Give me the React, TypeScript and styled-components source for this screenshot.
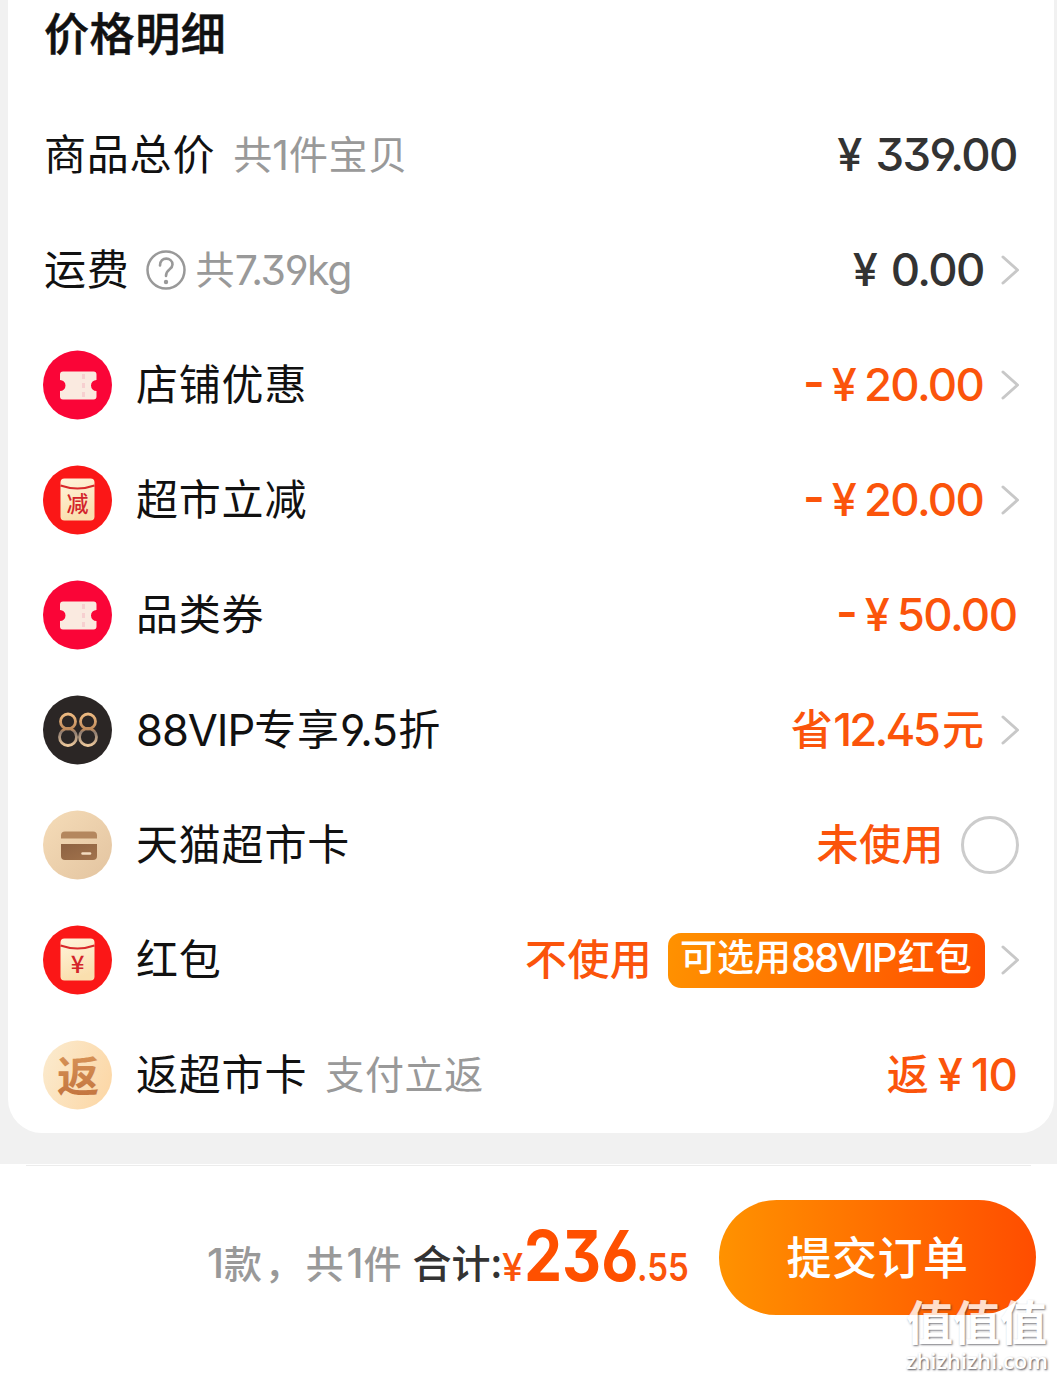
import React from 'react';
import styled, { createGlobalStyle } from 'styled-components';

const GlobalStyle = createGlobalStyle`
  * { box-sizing: border-box; }
  body {
    margin: 0;
    background: #f1f1f1;
    font-family: Inter, "Noto Sans CJK SC", sans-serif;
    font-feature-settings: "cv09" 1, "ss01" 1;
    color: #111;
  }
`;

const Page = styled.div`
  width: 1057px;
  height: 1379px;
  overflow: hidden;
  display: flex;
  flex-direction: column;
  position: relative;
`;

const Card = styled.section`
  margin: 0 3px 0 8px;
  height: 1133px;
  background: #fff;
  border-radius: 0 0 34px 34px;
  padding: 0 36px;
`;

const Title = styled.h1`
  margin: 0;
  height: 97.5px;
  font-size: 45px;
  line-height: 64px;
  font-weight: 500;
  -webkit-text-stroke: 0.5px #111;
  font-family: "Noto Sans CJK SC", sans-serif;
  letter-spacing: 0.6px;
`;

const Row = styled.div`
  height: 115px;
  display: flex;
  align-items: center;
  justify-content: space-between;
`;

const Side = styled.div`
  display: flex;
  align-items: center;
`;

type TextProps = {
  $size?: number;
  $weight?: number;
  $color?: string;
  $track?: number;
  $before?: number;
  $after?: number;
};

const Text = styled.span<TextProps>`
  display: block;
  white-space: pre;
  line-height: 60px;
  font-size: ${(p) => p.$size ?? 42}px;
  font-weight: ${(p) => p.$weight ?? 400};
  color: ${(p) => p.$color ?? '#111'};
  letter-spacing: ${(p) => p.$track ?? 0}px;
  margin: 0 ${(p) => p.$after ?? 0}px 0 ${(p) => p.$before ?? 0}px;
`;

const Han = styled(Text)`
  font-family: "Noto Sans CJK SC", sans-serif;
  padding-bottom: 6px;
`;

const Minus = styled(Text)`
  padding-bottom: 7px;
  font-weight: 600;
`;

const Icon = styled.svg`
  display: block;
  width: 70px;
  height: 70px;
  margin: 0 23px 0 -1px;
  font-family: "Noto Sans CJK SC", sans-serif;
`;

const Help = styled.svg`
  display: block;
  width: 40px;
  height: 40px;
  margin: 0 10px 0 16px;
`;

const Chevron = styled.svg`
  display: block;
  width: 20px;
  height: 32px;
  margin: 0 -2px 0 15px;
`;

const Radio = styled.span`
  width: 58px;
  height: 58px;
  border: 3px solid #ccc;
  border-radius: 50%;
  margin: 0 -1px 0 17px;
`;

const Badge = styled.span`
  display: flex;
  width: 317px;
  height: 55px;
  margin-left: 16px;
  padding: 0 0 5px 12px;
  align-items: center;
  border-radius: 13px;
  background: linear-gradient(100deg, #ff9200, #ff4d00);
`;

const Footer = styled.footer`
  margin-top: 31px;
  height: 215px;
  background: linear-gradient(#ececec, #ececec) 26px 1px / 1005px 1px no-repeat #fff;
  display: flex;
  align-items: flex-start;
  justify-content: space-between;
  padding: 36px 21px 0 207px;
`;

const Summary = styled.div`
  display: flex;
  align-items: flex-start;
`;

const Count = styled.div`
  display: flex;
  align-items: baseline;
  padding-top: 31px;
`;

const Total = styled.div`
  display: flex;
  align-items: baseline;
  padding-top: 26px;
`;

const Figure = styled.span<{ $size: number; $weight: number; $width: number; $before: number; $color: string }>`
  display: block;
  width: ${(p) => p.$width}px;
  margin-left: ${(p) => p.$before}px;
  font-size: ${(p) => p.$size}px;
  font-weight: ${(p) => p.$weight};
  line-height: 60px;
  color: ${(p) => p.$color};
  transform: scaleX(0.87);
  transform-origin: left;
`;

const Submit = styled.button`
  width: 317px;
  height: 115px;
  border: 0;
  border-radius: 58px;
  background: linear-gradient(90deg, #ff9200, #ff4d00);
  color: #fff;
  font: 500 45px/60px "Noto Sans CJK SC", sans-serif;
  letter-spacing: 0.5px;
  padding: 0 0 3px;
`;

const Watermark = styled.div`
  position: absolute;
  left: 906px;
  top: 1295px;
  width: 145px;
  color: #fff;
  opacity: 0.8;
  font-family: "Noto Sans CJK SC", sans-serif;
`;

const MarkName = styled.div`
  font-size: 47px;
  line-height: 50px;
  font-weight: 700;
  text-shadow: 1px 1px 2px rgba(50, 50, 60, 0.8);
`;

const MarkSite = styled.div`
  font: 600 22px/22px "Open Sans", sans-serif;
  letter-spacing: -0.1px;
  margin-top: 4px;
  text-shadow: 1px 1px 2px rgba(40, 40, 50, 1);
`;

const ORANGE = '#fb540b';
const GREY = '#999';
const DARK = '#333';

const Arrow = () => (
  <Chevron viewBox="0 0 20 32" fill="none" stroke="#c8c8c8" strokeWidth="3" strokeLinecap="round" strokeLinejoin="round">
    <path d="M3 3 17.5 16 3 29" />
  </Chevron>
);

const Coupon = () => (
  <Icon viewBox="0 0 70 70">
    <circle cx="34.500" cy="35" r="34.500" fill="#fa0537" />
    <path d="M20 21.500H50.500Q53.500 21.500 53.500 24.500V30A5.500 5.500 0 0 0 53.500 41V46.500Q53.500 49.500 50.500 49.500H20Q17 49.500 17 46.500V41A5.500 5.500 0 0 0 17 30V24.500Q17 21.500 20 21.500Z" fill="#faeae0" />
    <path d="M40.500 24V47" stroke="#f7d0d0" strokeWidth="3" strokeDasharray="5 4" />
  </Icon>
);

const Packet = ({ label, size }: { label: string; size: number }) => (
  <Icon viewBox="0 0 70 70">
    <defs>
      <linearGradient id="packet" x1="0" y1="0" x2="0.3" y2="1">
        <stop offset="0" stopColor="#fff4dc" />
        <stop offset="1" stopColor="#fadfae" />
      </linearGradient>
    </defs>
    <circle cx="34.500" cy="35" r="34.500" fill="#fb1717" />
    <rect x="17.500" y="13.500" width="34" height="42" rx="4" fill="url(#packet)" />
    <path d="M17.500 20.500Q34.500 26.500 51.500 20.500" fill="none" stroke="#d8292b" strokeWidth="2" />
    <text x="34.500" y={size > 22 ? 47.5 : 46.5} textAnchor="middle" fontSize={size} fontWeight="500" fill="#d3242b">{label}</text>
  </Icon>
);

const Vip = () => (
  <Icon viewBox="0 0 70 70">
    <defs>
      <linearGradient id="gold" gradientUnits="userSpaceOnUse" x1="0" y1="18" x2="0" y2="52">
        <stop offset="0" stopColor="#f0bc83" />
        <stop offset="0.48" stopColor="#c08a5a" />
        <stop offset="0.56" stopColor="#8d7b70" />
        <stop offset="1" stopColor="#f5cfa0" />
      </linearGradient>
    </defs>
    <circle cx="34.500" cy="35" r="34.500" fill="#2b2625" />
    <g fill="none" stroke="url(#gold)" strokeWidth="2.800">
      <circle cx="25" cy="26.500" r="7.500" />
      <circle cx="25" cy="42" r="8.500" />
      <circle cx="45" cy="26.500" r="7.500" />
      <circle cx="45" cy="42" r="8.500" />
    </g>
  </Icon>
);

const CardIcon = () => (
  <Icon viewBox="0 0 70 70">
    <defs>
      <linearGradient id="sand" x1="0" y1="0" x2="1" y2="1">
        <stop offset="0" stopColor="#f5dcb8" />
        <stop offset="1" stopColor="#e3c4a0" />
      </linearGradient>
      <linearGradient id="brown" x1="0" y1="0" x2="1" y2="1">
        <stop offset="0" stopColor="#8d6242" />
        <stop offset="1" stopColor="#a2734c" />
      </linearGradient>
    </defs>
    <circle cx="34.500" cy="35" r="34.500" fill="url(#sand)" />
    <path d="M18 28.500V25.500Q18 21.500 22 21.500H50Q54 21.500 54 25.500V28.500Z" fill="#b4875e" />
    <path d="M18 34H54V46Q54 50 50 50H22Q18 50 18 46Z" fill="url(#brown)" />
    <path d="M39.500 43.500H47" stroke="#f3dcc0" strokeWidth="2.500" strokeLinecap="round" />
  </Icon>
);

const Rebate = () => (
  <Icon viewBox="0 0 70 70">
    <defs>
      <linearGradient id="cream" x1="0" y1="0.200" x2="1" y2="0.600">
        <stop offset="0" stopColor="#fbeacd" />
        <stop offset="1" stopColor="#fcd8a8" />
      </linearGradient>
      <linearGradient id="copper" x1="0" y1="0" x2="0" y2="1">
        <stop offset="0" stopColor="#dc9a5c" />
        <stop offset="1" stopColor="#c0703c" />
      </linearGradient>
    </defs>
    <circle cx="34.500" cy="35" r="34.500" fill="url(#cream)" />
    <text x="35" y="51.500" textAnchor="middle" fontSize="42" fontWeight="700" fill="url(#copper)">返</text>
  </Icon>
);

const Discount = ({ value }: { value: string }) => (
  <>
    <Minus $size={47} $color={ORANGE}>-</Minus>
    <Text $size={45} $weight={500} $color={ORANGE} $before={7}>¥</Text>
    <Text $size={45.5} $weight={500} $color={ORANGE} $track={-1.6} $before={7} $after={1.6}>{value}</Text>
  </>
);

const Price = ({ value }: { value: string }) => (
  <>
    <Text $size={45} $weight={500} $color={DARK}>¥</Text>
    <Text $size={45.5} $weight={500} $color={DARK} $track={-1.6} $before={13} $after={1.2}>{value}</Text>
  </>
);

export default function App() {
  return (
    <>
      <GlobalStyle />
      <Page>
        <Card>
          <Title>价格明细</Title>
          <Row>
            <Side>
              <Han $track={0.8}>商品总价</Han>
              <Han $size={39} $color={GREY} $before={18}>共</Han>
              <Text $size={41} $color={GREY}>1</Text>
              <Han $size={39} $color={GREY} $track={0.7}>件宝贝</Han>
            </Side>
            <Side><Price value="339.00" /></Side>
          </Row>
          <Row>
            <Side>
              <Han $track={0.8}>运费</Han>
              <Help viewBox="0 0 40 40" fill="none" stroke="#999" strokeWidth="2.5">
                <circle cx="20" cy="20" r="18.500" />
                <path d="M14 15.500C14 6 26.500 7 26.500 14.500C26.500 20 20 18.500 20 26" strokeWidth="2.600" strokeLinecap="round" />
                <circle cx="20" cy="32" r="2.200" fill="#999" stroke="none" />
              </Help>
              <Han $size={39} $color={GREY}>共</Han>
              <Text $size={41} $color={GREY} $track={-1.4}>7.39kg</Text>
            </Side>
            <Side><Price value="0.00" /><Arrow /></Side>
          </Row>
          <Row>
            <Side><Coupon /><Han $track={0.8}>店铺优惠</Han></Side>
            <Side><Discount value="20.00" /><Arrow /></Side>
          </Row>
          <Row>
            <Side><Packet label="减" size={22} /><Han $track={0.8}>超市立减</Han></Side>
            <Side><Discount value="20.00" /><Arrow /></Side>
          </Row>
          <Row>
            <Side><Coupon /><Han $track={0.8}>品类券</Han></Side>
            <Side><Discount value="50.00" /></Side>
          </Row>
          <Row>
            <Side>
              <Vip />
              <Text $size={43.5} $track={-1}>88VIP</Text>
              <Han $track={0.8}>专享</Han>
              <Text $size={43.5} $track={-0.7}>9.5</Text>
              <Han $before={1}>折</Han>
            </Side>
            <Side>
              <Han $weight={500} $color={ORANGE}>省</Han>
              <Text $size={45.5} $weight={500} $color={ORANGE} $track={-2.8} $before={0.5} $after={4}>12.45</Text>
              <Han $weight={500} $color={ORANGE} $after={1}>元</Han>
              <Arrow />
            </Side>
          </Row>
          <Row>
            <Side><CardIcon /><Han $track={0.8}>天猫超市卡</Han></Side>
            <Side><Han $weight={500} $color={ORANGE} $track={0.5}>未使用</Han><Radio /></Side>
          </Row>
          <Row>
            <Side><Packet label="¥" size={24} /><Han $track={0.8}>红包</Han></Side>
            <Side>
              <Han $weight={500} $color={ORANGE} $track={0.3}>不使用</Han>
              <Badge>
                <Han $size={37} $weight={500} $color="#fff">可选用</Han>
                <Text $size={40} $weight={500} $color="#fff" $track={-2.2} $after={2.5}>88VIP</Text>
                <Han $size={37} $weight={500} $color="#fff">红包</Han>
              </Badge>
              <Arrow />
            </Side>
          </Row>
          <Row>
            <Side>
              <Rebate />
              <Han $track={0.8}>返超市卡</Han>
              <Han $size={39} $color={GREY} $track={0.7} $before={18}>支付立返</Han>
            </Side>
            <Side>
              <Han $weight={500} $color={ORANGE}>返</Han>
              <Text $size={45} $weight={500} $color={ORANGE} $before={9}>¥</Text>
              <Text $size={45.5} $weight={500} $color={ORANGE} $track={-1} $before={8} $after={1}>10</Text>
            </Side>
          </Row>
        </Card>
        <Footer>
          <Summary>
            <Count>
              <Text $size={41} $weight={500} $color={GREY}>1</Text>
              <Han $size={38} $weight={500} $color={GREY} $track={2.8}>款，共</Han>
              <Text $size={41} $weight={500} $color={GREY}>1</Text>
              <Han $size={38} $weight={500} $color={GREY}>件</Han>
              <Han $size={39} $weight={500} $color={DARK} $before={11}>合计:</Han>
            </Count>
            <Total>
              <Text $size={38} $weight={500} $color={ORANGE} $track={-1}>¥</Text>
              <Figure $size={69.5} $weight={700} $width={110} $before={2} $color="#ff5000">236</Figure>
              <Figure $size={38} $weight={600} $width={55} $before={3} $color={ORANGE}>.55</Figure>
            </Total>
          </Summary>
          <Submit>提交订单</Submit>
        </Footer>
        <Watermark>
          <MarkName>值值值</MarkName>
          <MarkSite>zhizhizhi.com</MarkSite>
        </Watermark>
      </Page>
    </>
  );
}
